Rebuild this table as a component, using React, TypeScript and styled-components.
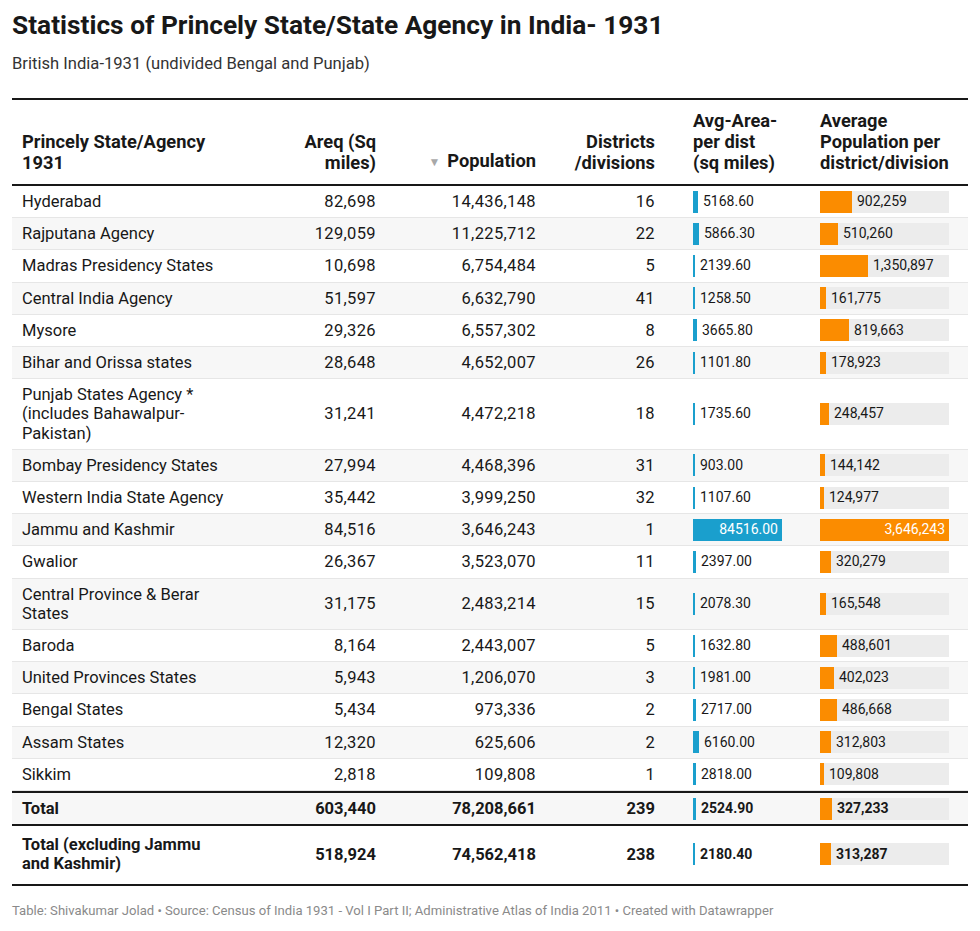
import styled, { createGlobalStyle } from "styled-components";

// one row of the table
type Row = {
    name: string;
    area: string;
    pop: string;
    dist: string;
    avgArea: number;
    avgPop: number;
};

const rows: Row[] = [
    { name: "Hyderabad", area: "82,698", pop: "14,436,148", dist: "16", avgArea: 5168.6, avgPop: 902259 },
    { name: "Rajputana Agency", area: "129,059", pop: "11,225,712", dist: "22", avgArea: 5866.3, avgPop: 510260 },
    { name: "Madras Presidency States", area: "10,698", pop: "6,754,484", dist: "5", avgArea: 2139.6, avgPop: 1350897 },
    { name: "Central India Agency", area: "51,597", pop: "6,632,790", dist: "41", avgArea: 1258.5, avgPop: 161775 },
    { name: "Mysore", area: "29,326", pop: "6,557,302", dist: "8", avgArea: 3665.8, avgPop: 819663 },
    { name: "Bihar and Orissa states", area: "28,648", pop: "4,652,007", dist: "26", avgArea: 1101.8, avgPop: 178923 },
    { name: "Punjab States Agency * (includes Bahawalpur-Pakistan)", area: "31,241", pop: "4,472,218", dist: "18", avgArea: 1735.6, avgPop: 248457 },
    { name: "Bombay Presidency States", area: "27,994", pop: "4,468,396", dist: "31", avgArea: 903, avgPop: 144142 },
    { name: "Western India State Agency", area: "35,442", pop: "3,999,250", dist: "32", avgArea: 1107.6, avgPop: 124977 },
    { name: "Jammu and Kashmir", area: "84,516", pop: "3,646,243", dist: "1", avgArea: 84516, avgPop: 3646243 },
    { name: "Gwalior", area: "26,367", pop: "3,523,070", dist: "11", avgArea: 2397, avgPop: 320279 },
    { name: "Central Province & Berar States", area: "31,175", pop: "2,483,214", dist: "15", avgArea: 2078.3, avgPop: 165548 },
    { name: "Baroda", area: "8,164", pop: "2,443,007", dist: "5", avgArea: 1632.8, avgPop: 488601 },
    { name: "United Provinces States", area: "5,943", pop: "1,206,070", dist: "3", avgArea: 1981, avgPop: 402023 },
    { name: "Bengal States", area: "5,434", pop: "973,336", dist: "2", avgArea: 2717, avgPop: 486668 },
    { name: "Assam States", area: "12,320", pop: "625,606", dist: "2", avgArea: 6160, avgPop: 312803 },
    { name: "Sikkim", area: "2,818", pop: "109,808", dist: "1", avgArea: 2818, avgPop: 109808 },
];

const totals: Row[] = [
    { name: "Total", area: "603,440", pop: "78,208,661", dist: "239", avgArea: 2524.9, avgPop: 327233 },
    { name: "Total (excluding Jammu and Kashmir)", area: "518,924", pop: "74,562,418", dist: "238", avgArea: 2180.4, avgPop: 313287 },
];

const MAX_AREA = 84516;
const MAX_POP = 3646243;
const AREA_W = 89;
const POP_W = 129;

const fmtPop = (n: number) => n.toLocaleString("en-US");

function AreaBar({ value, bold }: { value: number; bold?: boolean }) {
    const w = Math.max(2, Math.round((value / MAX_AREA) * AREA_W));
    const inside = value >= MAX_AREA;
    return (
        <BarLine>
            <BlueBar style={{ width: w }}>{inside && <InText>{value.toFixed(2)}</InText>}</BlueBar>
            {!inside && <BarText $bold={bold}>{value.toFixed(2)}</BarText>}
        </BarLine>
    );
}

function PopBar({ value, bold }: { value: number; bold?: boolean }) {
    const w = Math.max(2, Math.round((value / MAX_POP) * POP_W));
    const inside = value >= MAX_POP;
    return (
        <Track>
            <OrangeBar style={{ width: w }}>{inside && <InText>{fmtPop(value)}</InText>}</OrangeBar>
            {!inside && <BarText $bold={bold}>{fmtPop(value)}</BarText>}
        </Track>
    );
}

export default function App() {
    return (
        <Page>
            <GlobalStyle />
            <Title>Statistics of Princely State/State Agency in India- 1931</Title>
            <Subtitle>British India-1931 (undivided Bengal and Punjab)</Subtitle>

            <Table>
                <HeaderRow>
                    <HeadCell>Princely State/Agency<br />1931</HeadCell>
                    <HeadCell $right>Areq (Sq<br />miles)</HeadCell>
                    <HeadCell $right><SortArrow>▼</SortArrow>Population</HeadCell>
                    <HeadCell $right>Districts<br />/divisions</HeadCell>
                    <HeadCell $area>Avg-Area-<br />per dist<br />(sq miles)</HeadCell>
                    <HeadCell $pop>Average<br />Population per<br />district/division</HeadCell>
                </HeaderRow>

                {rows.map((r, i) => (
                    <BodyRow key={r.name} $alt={i % 2 === 1}>
                        <Cell>{r.name}</Cell>
                        <NumCell>{r.area}</NumCell>
                        <NumCell>{r.pop}</NumCell>
                        <NumCell>{r.dist}</NumCell>
                        <BarCell $area><AreaBar value={r.avgArea} /></BarCell>
                        <BarCell $pop><PopBar value={r.avgPop} /></BarCell>
                    </BodyRow>
                ))}

                {totals.map((r, i) => (
                    <TotalRow key={r.name} $alt={i === 0} $tall={i === 1}>
                        <Cell>{r.name}</Cell>
                        <Cell $right>{r.area}</Cell>
                        <Cell $right>{r.pop}</Cell>
                        <Cell $right>{r.dist}</Cell>
                        <BarCell $area><AreaBar value={r.avgArea} bold /></BarCell>
                        <BarCell $pop><PopBar value={r.avgPop} bold /></BarCell>
                    </TotalRow>
                ))}
            </Table>

            <Footer>
                Table: Shivakumar Jolad • Source: Census of India 1931 - Vol I Part II; Administrative Atlas of India 2011 • Created with Datawrapper
            </Footer>
        </Page>
    );
}

const GlobalStyle = createGlobalStyle`
  body {
    margin: 0;
    background: #ffffff;
    font-family: Roboto, "Liberation Sans", sans-serif;
    color: #181818;
  }
`;

const Page = styled.main`
  width: 980px;
  padding: 9px 12px 0;
  box-sizing: border-box;
`;

const Title = styled.h1`
  margin: 0;
  font-size: 26.3px;
  line-height: 32px;
  font-weight: 700;
  color: #181818;
`;

const Subtitle = styled.p`
  margin: 12px 0 0;
  font-size: 16.6px;
  line-height: 21px;
  color: #333333;
`;

const Table = styled.div`
  margin-top: 24px;
  border-top: 2px solid #181818;
  border-bottom: 2px solid #181818;
`;

const Grid = styled.div`
  display: grid;
  grid-template-columns: 224px 150px 160px 119px 145px 158px;
  align-items: center;
`;

const HeaderRow = styled(Grid)`
  align-items: end;
  border-bottom: 2px solid #181818;
  padding: 10px 0 11px;
`;

const BodyRow = styled(Grid)<{ $alt?: boolean }>`
  background: ${(p) => (p.$alt ? "#f7f7f7" : "#ffffff")};
  border-bottom: 1px solid #e6e6e6;
  font-size: 16.5px;
  line-height: 19.2px;
`;

const TotalRow = styled(Grid)<{ $alt?: boolean; $tall?: boolean }>`
  background: ${(p) => (p.$alt ? "#f7f7f7" : "#ffffff")};
  border-top: 2px solid #181818;
  padding: ${(p) => (p.$tall ? "3px 0 4px" : "0")};
  font-size: 16.5px;
  line-height: 19.2px;
  font-weight: 700;
`;

const Cell = styled.div<{ $right?: boolean }>`
  padding: 6px 10px;
  text-align: ${(p) => (p.$right ? "right" : "left")};
`;

const NumCell = styled(Cell).attrs({ $right: true })`
  letter-spacing: 0.35px;
`;

const BarCell = styled.div<{ $area?: boolean; $pop?: boolean }>`
  padding: 0 ${(p) => (p.$pop ? "19px" : "10px")} 0 ${(p) => (p.$area ? "28px" : "10px")};
`;

const HeadCell = styled.div<{ $right?: boolean; $area?: boolean; $pop?: boolean }>`
  padding: 0 ${(p) => (p.$pop ? "8px" : "10px")} 0 ${(p) => (p.$area ? "28px" : "10px")};
  text-align: ${(p) => (p.$right ? "right" : "left")};
  font-size: 18.3px;
  line-height: 21px;
  font-weight: 700;
  color: #181818;
  white-space: nowrap;
`;

const SortArrow = styled.span`
  font-size: 12px;
  color: #a8a8a8;
  margin-right: 7px;
  vertical-align: 1px;
`;

const BarLine = styled.div`
  display: flex;
  align-items: center;
  height: 22px;
`;

const Track = styled(BarLine)`
  width: ${POP_W}px;
  background: #ececec;
`;

const BlueBar = styled.div`
  height: 22px;
  background: #1a9fcd;
  display: flex;
  align-items: center;
  justify-content: flex-end;
  flex-shrink: 0;
`;

const OrangeBar = styled(BlueBar)`
  background: #fb8c00;
`;

const BarText = styled.span<{ $bold?: boolean }>`
  font-size: 14px;
  font-weight: ${(p) => (p.$bold ? 700 : 400)};
  margin-left: 5px;
  color: #181818;
  white-space: nowrap;
`;

const InText = styled.span`
  font-size: 14px;
  color: #ffffff;
  padding-right: 4px;
  white-space: nowrap;
`;

const Footer = styled.p`
  margin: 17px 0 0;
  font-size: 13.1px;
  line-height: 16px;
  color: #8a8a8a;
`;
